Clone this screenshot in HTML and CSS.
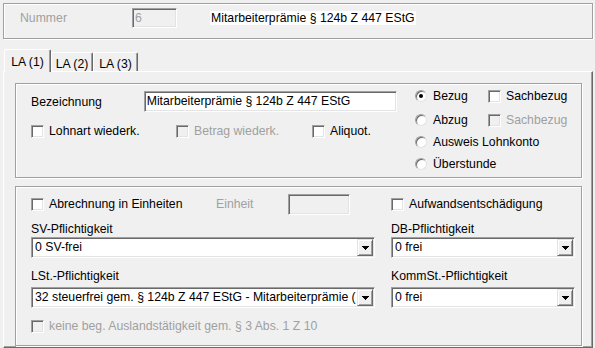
FILE: index.html
```html
<!DOCTYPE html>
<html lang="de">
<head>
    <meta charset="UTF-8">
    <title>Lohnart</title>
    <link rel="stylesheet" href="styles.css">
</head>
<body>
    <div class="kopf">
        <span class="kopf-label">Nummer</span>
        <span class="feld feld-aus nummer">6</span>
        <span class="kopf-titel">Mitarbeiterprämie § 124b Z 447 EStG</span>
    </div>

    <div class="reiter">
        <div class="tab aktiv t1">LA (1)</div>
        <div class="tab t2">LA (2)</div>
        <div class="tab t3">LA (3)</div>
    </div>

    <div class="panel">
        <div class="gruppe g1">
            <div class="links">
                <div class="zeile">
                    <span class="lbl-bez">Bezeichnung</span>
                    <span class="feld bez">Mitarbeiterprämie § 124b Z 447 EStG</span>
                </div>
                <div class="zeile zeile-cb">
                    <span class="cb w-lohnart"><span class="box"></span>Lohnart wiederk.</span>
                    <span class="cb aus w-betrag"><span class="box"></span>Betrag wiederk.</span>
                    <span class="cb"><span class="box"></span>Aliquot.</span>
                </div>
            </div>
            <div class="rechts">
                <div class="r-zeile erste">
                    <span class="opt"><span class="radio an"></span>Bezug</span>
                    <span class="cb"><span class="box"></span>Sachbezug</span>
                </div>
                <div class="r-zeile zweite">
                    <span class="opt"><span class="radio"></span>Abzug</span>
                    <span class="cb aus"><span class="box"></span>Sachbezug</span>
                </div>
                <div class="r-zeile">
                    <span class="opt"><span class="radio"></span>Ausweis Lohnkonto</span>
                </div>
                <div class="r-zeile">
                    <span class="opt"><span class="radio"></span>Überstunde</span>
                </div>
            </div>
        </div>

        <div class="gruppe g2">
            <div class="reihe reihe-a">
                <div class="einheit-zeile">
                    <span class="cb w-abr"><span class="box"></span>Abrechnung in Einheiten</span>
                    <span class="lbl-einheit">Einheit</span>
                    <span class="feld feld-aus einheit"></span>
                </div>
                <span class="cb"><span class="box"></span>Aufwandsentschädigung</span>
            </div>

            <div class="reihe titel-1">
                <span class="titel">SV-Pflichtigkeit</span>
                <span class="titel">DB-Pflichtigkeit</span>
            </div>
            <div class="reihe">
                <div class="auswahl"><span class="wert">0 SV-frei</span><span class="knopf"><svg width="7" height="4" viewBox="0 0 7 4"><path d="M0 0h7v1H0zM1 1h5v1H1zM2 2h3v1H2zM3 3h1v1H3z"/></svg></span></div>
                <div class="auswahl"><span class="wert">0 frei</span><span class="knopf"><svg width="7" height="4" viewBox="0 0 7 4"><path d="M0 0h7v1H0zM1 1h5v1H1zM2 2h3v1H2zM3 3h1v1H3z"/></svg></span></div>
            </div>

            <div class="reihe titel-2">
                <span class="titel">LSt.-Pflichtigkeit</span>
                <span class="titel">KommSt.-Pflichtigkeit</span>
            </div>
            <div class="reihe auswahl-2">
                <div class="auswahl"><span class="wert">32 steuerfrei gem. § 124b Z 447 EStG - Mitarbeiterprämie (</span><span class="knopf"><svg width="7" height="4" viewBox="0 0 7 4"><path d="M0 0h7v1H0zM1 1h5v1H1zM2 2h3v1H2zM3 3h1v1H3z"/></svg></span></div>
                <div class="auswahl"><span class="wert">0 frei</span><span class="knopf"><svg width="7" height="4" viewBox="0 0 7 4"><path d="M0 0h7v1H0zM1 1h5v1H1zM2 2h3v1H2zM3 3h1v1H3z"/></svg></span></div>
            </div>

            <div class="fuss">
                <span class="cb aus"><span class="box"></span>keine beg. Auslandstätigkeit gem. § 3 Abs. 1 Z 10</span>
            </div>
        </div>
    </div>
</body>
</html>
```

FILE: styles.css
```css
* {
    box-sizing: border-box;
}

body {
    margin: 0;
    width: 595px;
    height: 348px;
    overflow: hidden;
    background-color: #f0f0f0;
    color: #000;
    font-family: "Liberation Sans", Arial, sans-serif;
    font-size: 12.25px;
    line-height: 15px;
}

/* Kopfbereich */
.kopf {
    margin: 3px 2px 0 3px;
    height: 36px;
    border: 1px solid #a0a0a0;
    box-shadow: inset 1px 1px 0 #fff, 1px 1px 0 #fff;
    display: flex;
    align-items: flex-start;
    padding: 4px 0 0 16px;
}

.kopf-label {
    width: 112px;
    line-height: 20px;
    color: #a0a0a0;
}

.feld {
    display: flex;
    align-items: center;
    height: 21px;
    padding-left: 2px;
    background: #fff;
    border: 1px solid;
    border-color: #a0a0a0 #fff #fff #a0a0a0;
    box-shadow: inset 1px 1px 0 #696969, inset -1px -1px 0 #e3e3e3;
    white-space: nowrap;
    overflow: hidden;
}

.feld-aus {
    background: #f0f0f0;
    color: #a0a0a0;
}

.nummer {
    width: 45px;
    height: 20px;
}

.kopf-titel {
    margin: 3px 0 0 33px;
    padding: 0 1px;
    background: #fff;
    line-height: 14px;
}

/* Reiter */
.reiter {
    display: flex;
    align-items: flex-end;
    height: 22px;
    margin: 10px 0 0 4px;
    position: relative;
    z-index: 1;
}

.tab {
    height: 19px;
    padding-top: 4px;
    text-align: center;
    border: 1px solid;
    border-bottom: none;
    border-color: #fff #696969 #696969 #fff;
    box-shadow: inset -1px 0 0 #a0a0a0;
    border-radius: 2px 2px 0 0;
}

.tab.aktiv {
    height: 23px;
    margin-bottom: -1px;
    padding-top: 5px;
    background: #f0f0f0;
}

.t1 { width: 47px; }
.t2 { width: 42px; }
.t3 { width: 45px; }

/* Panel */
.panel {
    margin: 0 2px 0 3px;
    height: 277px;
    border: 1px solid;
    border-color: #fff #696969 #696969 #fff;
    box-shadow: inset -1px -1px 0 #a0a0a0;
    padding: 11px 10px 0 11px;
}

.gruppe {
    border: 1px solid #a0a0a0;
    box-shadow: inset 1px 1px 0 #fff, 1px 1px 0 #fff;
}

.g1 {
    height: 95px;
    display: flex;
    padding: 2px 0 0 15px;
}

.links {
    width: 366px;
    padding-top: 5px;
}

.zeile {
    display: flex;
    align-items: center;
}

.lbl-bez {
    width: 113px;
    padding-top: 1px;
}

.bez {
    width: 254px;
}

.zeile-cb {
    height: 20px;
    margin-top: 9px;
}

.w-lohnart { width: 145px; }
.w-betrag { width: 136px; }

.rechts {
    margin-left: 18px;
}

.r-zeile {
    display: flex;
    align-items: center;
    height: 22px;
}

.r-zeile.erste {
    height: 20px;
}

.r-zeile.zweite {
    margin-top: 3px;
}

.opt {
    display: flex;
    align-items: center;
    width: 73px;
    white-space: nowrap;
}

/* Kontrollkästchen und Optionsfelder */
.cb {
    display: flex;
    align-items: center;
    white-space: nowrap;
}

.box {
    flex: none;
    width: 13px;
    height: 13px;
    margin-right: 5px;
    background: #fff;
    border: 1px solid;
    border-color: #a0a0a0 #fff #fff #a0a0a0;
    box-shadow: inset 1px 1px 0 #696969, inset -1px -1px 0 #e3e3e3;
}

.cb.aus {
    color: #a0a0a0;
}

.cb.aus .box {
    background: #f0f0f0;
}

.radio {
    flex: none;
    width: 12px;
    height: 12px;
    margin-right: 6px;
    border-radius: 50%;
    background: #fff;
    border: 1px solid;
    border-color: #a0a0a0 #e3e3e3 #e3e3e3 #a0a0a0;
    box-shadow: inset 1px 1px 0 #696969;
    display: flex;
    align-items: center;
    justify-content: center;
}

.radio.an::after {
    content: "";
    width: 4px;
    height: 4px;
    border-radius: 50%;
    background: #000;
}

/* Gruppe 2 */
.g2 {
    height: 160px;
    margin-top: 8px;
    padding: 7px 0 0 15px;
}

.reihe {
    display: grid;
    grid-template-columns: 344px 184px;
    column-gap: 16px;
    align-items: center;
}

.reihe-a {
    height: 21px;
}

.einheit-zeile {
    display: flex;
    align-items: center;
}

.w-abr { width: 185px; }

.lbl-einheit {
    width: 72px;
    color: #a0a0a0;
}

.einheit {
    width: 62px;
}

.titel-1 {
    margin-top: 7px;
}

.titel-2 {
    margin-top: 11px;
}

.auswahl-2 {
    margin-top: 3px;
}

.auswahl {
    display: flex;
    align-items: center;
    height: 21px;
    padding-left: 2px;
    background: #fff;
    border: 1px solid;
    border-color: #a0a0a0 #fff #fff #a0a0a0;
    box-shadow: inset 1px 1px 0 #696969, inset -1px -1px 0 #e3e3e3;
    overflow: hidden;
}

.wert {
    flex: 1;
    min-width: 0;
    padding-left: 1px;
    white-space: nowrap;
    overflow: hidden;
}

.knopf {
    flex: none;
    width: 16px;
    height: 17px;
    margin-right: 1px;
    display: flex;
    align-items: center;
    justify-content: center;
    background: #f0f0f0;
    border: 1px solid;
    border-color: #e3e3e3 #696969 #696969 #e3e3e3;
    box-shadow: inset 1px 1px 0 #fff, inset -1px -1px 0 #a0a0a0;
}

.knopf svg {
    display: block;
    fill: #000;
    shape-rendering: crispEdges;
}

.fuss {
    height: 20px;
    margin-top: 8px;
    display: flex;
    align-items: center;
}
```
